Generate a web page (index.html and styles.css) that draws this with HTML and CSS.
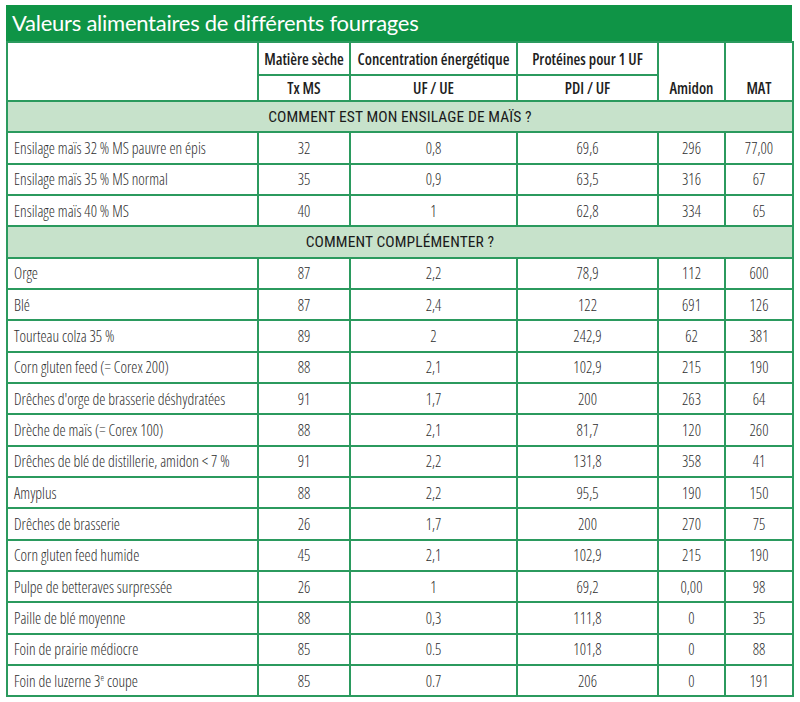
FILE: index.html
```html
<!DOCTYPE html>
<html lang="fr">
<head>
<meta charset="utf-8">
<title>Valeurs alimentaires de différents fourrages</title>
<link rel="stylesheet" href="styles.css">
</head>
<body>
<div class="sheet">
  <h1 class="title">Valeurs alimentaires de différents fourrages</h1>
  <table class="grid">
    <colgroup>
      <col class="c-label"><col class="c-ms"><col class="c-uf"><col class="c-pdi"><col class="c-am"><col class="c-mat">
    </colgroup>
    <thead>
      <tr class="h1">
        <th rowspan="2"></th>
        <th>Matière sèche</th>
        <th>Concentration énergétique</th>
        <th>Protéines pour 1 UF</th>
        <th rowspan="2" class="bottom">Amidon</th>
        <th rowspan="2" class="bottom">MAT</th>
      </tr>
      <tr class="h2">
        <th>Tx MS</th>
        <th>UF / UE</th>
        <th>PDI / UF</th>
      </tr>
    </thead>
    <tbody>
      <tr class="section"><td colspan="6">COMMENT EST MON ENSILAGE DE MAÏS ?</td></tr>
      <tr><td>Ensilage maïs 32 % MS pauvre en épis</td><td>32</td><td>0,8</td><td>69,6</td><td>296</td><td>77,00</td></tr>
      <tr><td>Ensilage maïs 35 % MS normal</td><td>35</td><td>0,9</td><td>63,5</td><td>316</td><td>67</td></tr>
      <tr><td>Ensilage maïs 40 % MS</td><td>40</td><td>1</td><td>62,8</td><td>334</td><td>65</td></tr>
      <tr class="section"><td colspan="6">COMMENT COMPLÉMENTER ?</td></tr>
      <tr><td>Orge</td><td>87</td><td>2,2</td><td>78,9</td><td>112</td><td>600</td></tr>
      <tr><td>Blé</td><td>87</td><td>2,4</td><td>122</td><td>691</td><td>126</td></tr>
      <tr><td>Tourteau colza 35 %</td><td>89</td><td>2</td><td>242,9</td><td>62</td><td>381</td></tr>
      <tr><td>Corn gluten feed (= Corex 200)</td><td>88</td><td>2,1</td><td>102,9</td><td>215</td><td>190</td></tr>
      <tr><td>Drêches d'orge de brasserie déshydratées</td><td>91</td><td>1,7</td><td>200</td><td>263</td><td>64</td></tr>
      <tr><td>Drèche de maïs (= Corex 100)</td><td>88</td><td>2,1</td><td>81,7</td><td>120</td><td>260</td></tr>
      <tr><td>Drêches de blé de distillerie, amidon &lt; 7 %</td><td>91</td><td>2,2</td><td>131,8</td><td>358</td><td>41</td></tr>
      <tr><td>Amyplus</td><td>88</td><td>2,2</td><td>95,5</td><td>190</td><td>150</td></tr>
      <tr><td>Drêches de brasserie</td><td>26</td><td>1,7</td><td>200</td><td>270</td><td>75</td></tr>
      <tr><td>Corn gluten feed humide</td><td>45</td><td>2,1</td><td>102,9</td><td>215</td><td>190</td></tr>
      <tr><td>Pulpe de betteraves surpressée</td><td>26</td><td>1</td><td>69,2</td><td>0,00</td><td>98</td></tr>
      <tr><td>Paille de blé moyenne</td><td>88</td><td>0,3</td><td>111,8</td><td>0</td><td>35</td></tr>
      <tr><td>Foin de prairie médiocre</td><td>85</td><td>0.5</td><td>101,8</td><td>0</td><td>88</td></tr>
      <tr><td>Foin de luzerne 3<sup>e</sup> coupe</td><td>85</td><td>0.7</td><td>206</td><td>0</td><td>191</td></tr>
    </tbody>
  </table>
</div>
</body>
</html>
```

FILE: styles.css
```css
html, body {
  margin: 0;
  padding: 0;
  background: #ffffff;
}

.sheet {
  width: 786px;
  padding: 5px 0 0 6px;
  font-family: "Open Sans", "Roboto Condensed", sans-serif;
  font-stretch: 75%;
  color: #2b2b2b;
}

.title {
  margin: 0;
  height: 36px;
  box-sizing: border-box;
  padding: 3px 0 0 6px;
  background: #0f9446;
  color: #ffffff;
  font-family: "Lato", sans-serif;
  font-stretch: normal;
  font-weight: 400;
  font-size: 22px;
  line-height: 30px;
  letter-spacing: -0.25px;
}

.grid {
  width: 786px;
  border-collapse: collapse;
  table-layout: fixed;
}

.c-label { width: 251px; }
.c-ms { width: 92px; }
.c-uf { width: 167px; }
.c-pdi { width: 141px; }
.c-am { width: 67px; }
.c-mat { width: 68px; }

.grid th,
.grid td {
  border: 2px solid #2b9a5e;
  padding: 0;
  text-align: center;
  vertical-align: middle;
}

.grid th {
  font-weight: 600;
  font-size: 15.5px;
  color: #1e1e1e;
}

.h1 { height: 33px; }
.h2 { height: 26px; }

.h2 th {
  vertical-align: bottom;
  padding-bottom: 1px;
}

.grid th.bottom {
  vertical-align: bottom;
  padding-bottom: 1px;
}

.grid tbody tr { height: 31.33px; }

.grid td {
  font-size: 15.5px;
  font-weight: 350;
  color: #2e2e2e;
}

.grid td:first-child {
  text-align: left;
  padding-left: 6px;
  white-space: nowrap;
}

.grid tr.section td {
  background: #c7e2cb;
  text-align: center;
  padding-left: 0;
  font-family: "Roboto Condensed", "Open Sans", sans-serif;
  font-stretch: normal;
  font-weight: 400;
  font-size: 15.5px;
  letter-spacing: 0.1px;
  color: #1a1a1a;
}

sup {
  font-size: 9px;
  vertical-align: 6px;
  line-height: 0;
}
```
